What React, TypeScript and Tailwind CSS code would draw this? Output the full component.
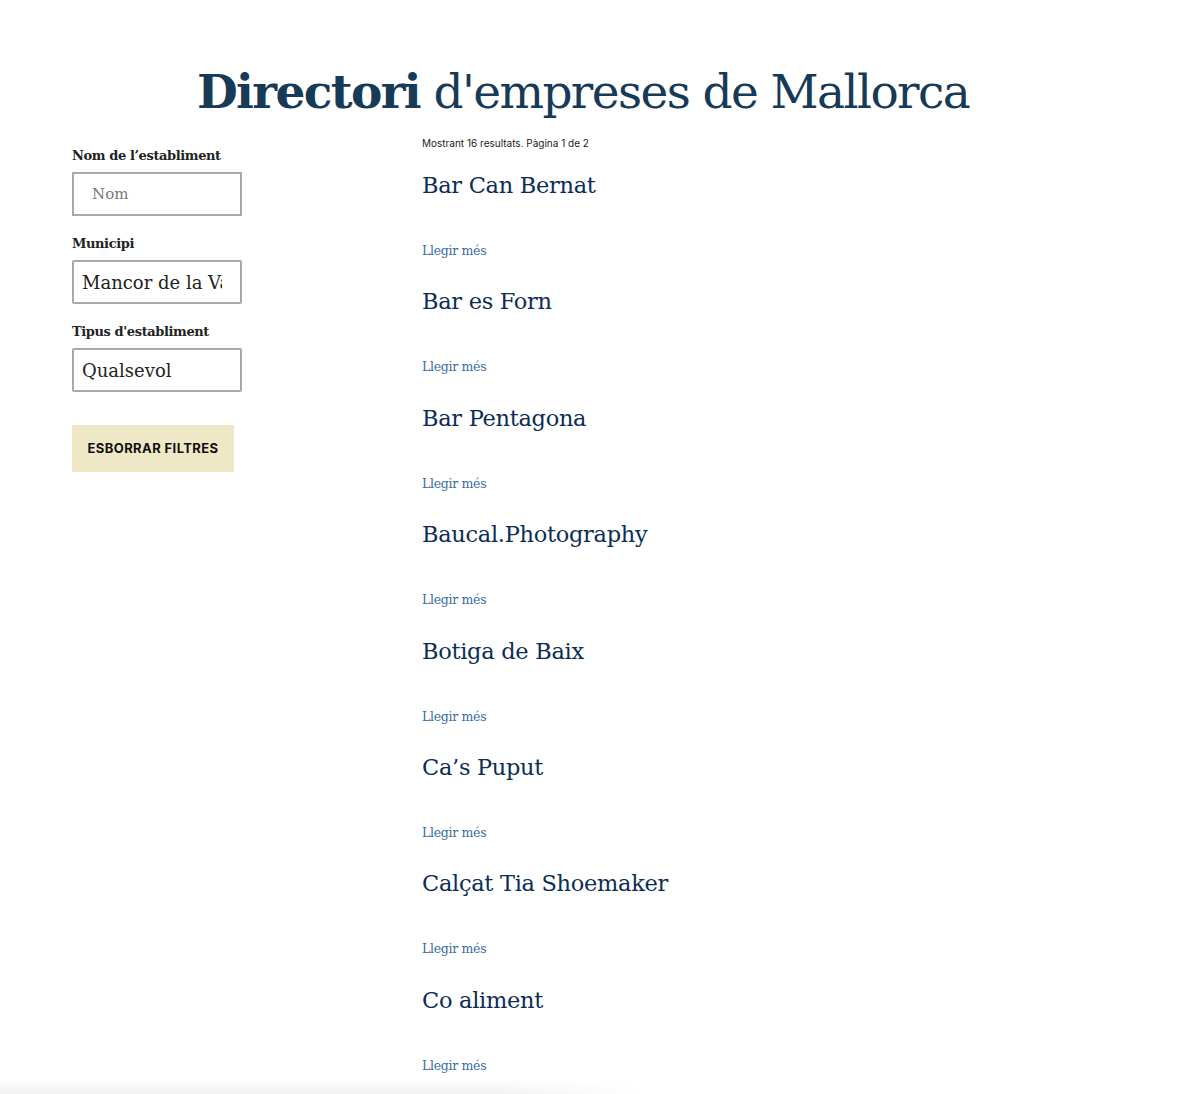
const empreses = [
  "Bar Can Bernat",
  "Bar es Forn",
  "Bar Pentagona",
  "Baucal.Photography",
  "Botiga de Baix",
  "Ca’s Puput",
  "Calçat Tia Shoemaker",
  "Co aliment",
];

const serif = "font-['DejaVu_Serif',serif]";

function Camp({ label, children }: { label: string; children: React.ReactNode }) {
  return (
    <div className="flex flex-col">
      <label className={`${serif} text-[13px] font-bold text-[#222] leading-[18px] mb-[7px] tracking-[-0.4px]`}>
        {label}
      </label>
      {children}
    </div>
  );
}

export default function App() {
  return (
    <div className="relative min-h-[1094px] bg-white overflow-hidden">
      {/* Capçalera */}
      <h1
        className={`${serif} text-center text-[#173a56] text-[47px] leading-none pt-[68px] pr-[34px] tracking-[-1.6px]`}
      >
        <span className="font-bold">Directori</span>{" "}
        <span className="font-light">d'empreses de Mallorca</span>
      </h1>

      <div className="flex mt-[21px]">
        {/* Filtres */}
        <aside className="w-[422px] shrink-0 pl-[72px] flex flex-col gap-[19px] pt-[11px]">
          <Camp label="Nom de l’establiment">
            <input
              placeholder="Nom"
              className={`${serif} w-[170px] h-[44px] border-2 border-[#a9a9a9] px-[18px] text-[15px] text-[#333] placeholder:text-[#777] outline-none`}
            />
          </Camp>
          <Camp label="Municipi">
            <div
              className={`${serif} w-[170px] h-[44px] border-2 border-[#a9a9a9] rounded-[2px] pl-[8px] text-[18px] text-[#222] flex items-center overflow-hidden whitespace-nowrap`}
            >
              <span className="w-[140px] overflow-hidden">Mancor de la Vall</span>
            </div>
          </Camp>
          <Camp label="Tipus d'establiment">
            <div
              className={`${serif} w-[170px] h-[44px] border-2 border-[#a9a9a9] rounded-[2px] pl-[8px] text-[18px] text-[#222] flex items-center`}
            >
              Qualsevol
            </div>
          </Camp>
          <button className="mt-[14px] w-[162px] h-[47px] bg-[#efe8c6] font-['Inter',sans-serif] font-bold text-[13px] tracking-[0.4px] text-[#111]">
            ESBORRAR FILTRES
          </button>
        </aside>

        {/* Resultats */}
        <main className="flex-1">
          <p className="font-['Inter',sans-serif] text-[10px] text-[#222] leading-[14px] mb-[20px]">
            Mostrant 16 resultats. Pàgina 1 de 2
          </p>
          <ul className="flex flex-col">
            {empreses.map((nom) => (
              <li key={nom} className="h-[116.4px]">
                <h2 className={`${serif} text-[22.5px] text-[#0d2d55] leading-[30px] tracking-[-0.3px]`}>{nom}</h2>
                <a href="#" className={`${serif} block mt-[43px] text-[12.5px] text-[#3a6c9e] leading-[16px] tracking-[-0.3px]`}>
                  Llegir més
                </a>
              </li>
            ))}
          </ul>
        </main>
      </div>

      {/* Ombra inferior */}
      <div className="absolute left-0 bottom-0 w-[640px] h-[22px] bg-gradient-to-b from-white/0 to-[#e9e9e9] [mask-image:linear-gradient(to_right,black_75%,transparent)]" />
    </div>
  );
}
